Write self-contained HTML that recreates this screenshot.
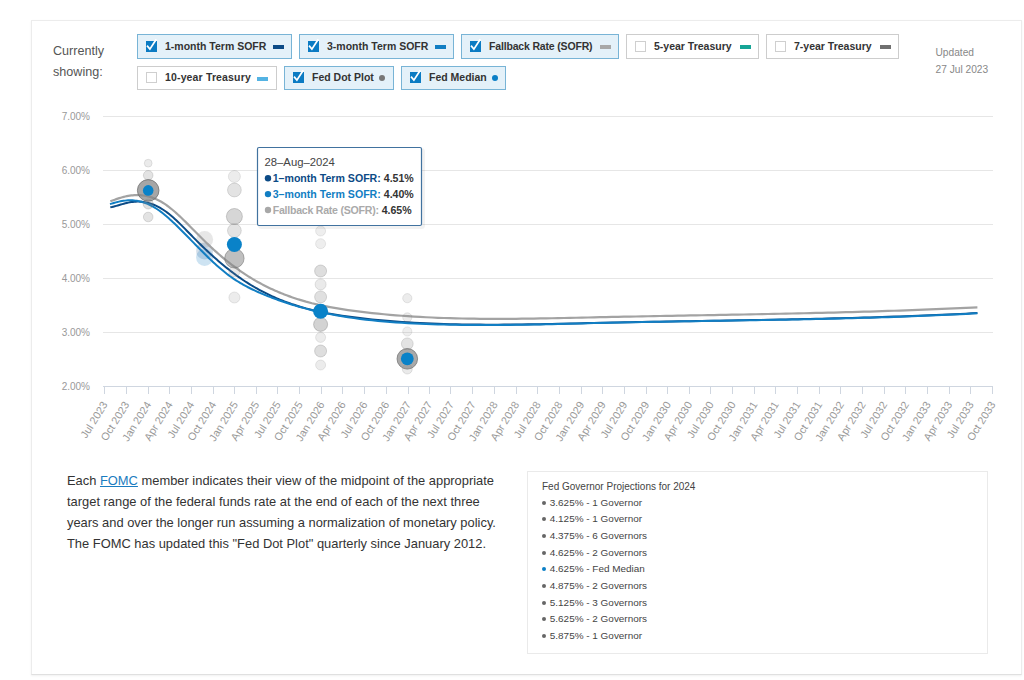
<!DOCTYPE html>
<html><head><meta charset="utf-8">
<style>
html,body{margin:0;padding:0;background:#fff;}
body{width:1024px;height:680px;overflow:hidden;position:relative;font-family:"Liberation Sans",sans-serif;}
.panel{position:absolute;left:31px;top:20px;width:991px;height:655px;box-sizing:border-box;border:1px solid #ececec;border-bottom-color:#e0e0e0;background:#fff;box-shadow:0 1px 2px rgba(0,0,0,0.06);}
.cur{position:absolute;left:53px;top:41px;font-size:12.6px;line-height:21px;color:#555;}
.btn{position:absolute;box-sizing:border-box;border:1px solid #cdcdcd;background:#fff;font-size:10.5px;font-weight:bold;color:#333;}
.btn.on{background:#e4f1f9;border-color:#78b4d6;}
.cb{position:absolute;left:8px;width:10.6px;height:10.6px;box-sizing:border-box;border:1px solid #cfcfcf;background:#fff;}
.btn.on .cb{background:#0b7bc3;border-color:#0b7bc3;}
.ckw{position:absolute;left:8px;width:14px;height:14px;}
.ckw svg{display:block}
.lbl{position:absolute;left:27px;white-space:nowrap;line-height:14px;}
.dash{position:absolute;width:11px;height:4px;}
.dot{position:absolute;width:6px;height:6px;border-radius:50%;}
.upd{position:absolute;left:935.5px;top:44px;font-size:10.2px;line-height:17px;color:#888;}
.chart{position:absolute;left:0;top:0;}
.yl{font-size:10px;fill:#999;text-anchor:end;}
.xl{font-size:10.8px;fill:#999;text-anchor:end;}
.tt{font-size:11.3px;}
.tt.b{font-size:10.6px;}
.tt.b{font-weight:bold;}
.para{position:absolute;left:67px;top:469.5px;width:470px;font-size:12.9px;line-height:21.25px;color:#333;}
.para a{color:#1a7cc0;text-decoration:underline;}
.proj{position:absolute;left:527px;top:471px;width:461px;height:183px;box-sizing:border-box;border:1px solid #eaeaea;}
.pt{position:absolute;left:14px;top:8.5px;font-size:10px;color:#444;white-space:nowrap;}
.pl{position:absolute;left:13.8px;top:22.5px;}
.pi{font-size:9.95px;line-height:16.7px;color:#444;white-space:nowrap;}
.pd{display:inline-block;width:4px;height:4px;border-radius:50%;margin-right:4px;vertical-align:1px;}
</style></head>
<body>
<div class="panel"></div>
<div class="cur">Currently<br>showing:</div>
<div class="btn on" style="left:137px;top:34px;width:155px;height:25px"><div class="cb" style="top:6.2px"></div><div class="ckw" style="top:3.2px"><svg class="ck" width="14" height="14" viewBox="0 0 14 14"><path d="M1.6,8.3 L3.9,11.1 L9.8,1.9" stroke="#fff" stroke-width="1.75" fill="none" stroke-linecap="square"/></svg></div><div class="lbl" style="top:3.5px;letter-spacing:0.00px">1-month Term SOFR</div><div class="dash" style="left:134.9px;top:10.0px;background:#0c4b86"></div></div>
<div class="btn on" style="left:299px;top:34px;width:155px;height:25px"><div class="cb" style="top:6.2px"></div><div class="ckw" style="top:3.2px"><svg class="ck" width="14" height="14" viewBox="0 0 14 14"><path d="M1.6,8.3 L3.9,11.1 L9.8,1.9" stroke="#fff" stroke-width="1.75" fill="none" stroke-linecap="square"/></svg></div><div class="lbl" style="top:3.5px;letter-spacing:0.00px">3-month Term SOFR</div><div class="dash" style="left:134.9px;top:10.0px;background:#117ec3"></div></div>
<div class="btn on" style="left:461px;top:34px;width:158px;height:25px"><div class="cb" style="top:6.2px"></div><div class="ckw" style="top:3.2px"><svg class="ck" width="14" height="14" viewBox="0 0 14 14"><path d="M1.6,8.3 L3.9,11.1 L9.8,1.9" stroke="#fff" stroke-width="1.75" fill="none" stroke-linecap="square"/></svg></div><div class="lbl" style="top:3.5px;letter-spacing:-0.17px">Fallback Rate (SOFR)</div><div class="dash" style="left:137.6px;top:10.0px;background:#a8a8a8"></div></div>
<div class="btn" style="left:626px;top:34px;width:133px;height:25px"><div class="cb" style="top:6.2px"></div><div class="lbl" style="top:3.5px;letter-spacing:0.00px">5-year Treasury</div><div class="dash" style="left:112.6px;top:10.0px;background:#16a596"></div></div>
<div class="btn" style="left:766px;top:34px;width:133px;height:25px"><div class="cb" style="top:6.2px"></div><div class="lbl" style="top:3.5px;letter-spacing:0.00px">7-year Treasury</div><div class="dash" style="left:112.6px;top:10.0px;background:#707070"></div></div>
<div class="btn" style="left:137px;top:66px;width:140px;height:24px"><div class="cb" style="top:5.2px"></div><div class="lbl" style="top:3.0px;letter-spacing:0.15px">10-year Treasury</div><div class="dash" style="left:119.4px;top:9.5px;background:#54b3e3"></div></div>
<div class="btn on" style="left:284px;top:66px;width:110px;height:24px"><div class="cb" style="top:5.2px"></div><div class="ckw" style="top:2.2px"><svg class="ck" width="14" height="14" viewBox="0 0 14 14"><path d="M1.6,8.3 L3.9,11.1 L9.8,1.9" stroke="#fff" stroke-width="1.75" fill="none" stroke-linecap="square"/></svg></div><div class="lbl" style="top:3.0px;letter-spacing:0.00px">Fed Dot Plot</div><div class="dot" style="left:94.4px;top:8.0px;background:#777777"></div></div>
<div class="btn on" style="left:401px;top:66px;width:105px;height:24px"><div class="cb" style="top:5.2px"></div><div class="ckw" style="top:2.2px"><svg class="ck" width="14" height="14" viewBox="0 0 14 14"><path d="M1.6,8.3 L3.9,11.1 L9.8,1.9" stroke="#fff" stroke-width="1.75" fill="none" stroke-linecap="square"/></svg></div><div class="lbl" style="top:3.0px;letter-spacing:0.00px">Fed Median</div><div class="dot" style="left:89.5px;top:8.0px;background:#0b7fc6"></div></div>
<div class="upd">Updated<br>27 Jul 2023</div>
<svg class="chart" width="1024" height="460" viewBox="0 0 1024 460">
<path d="M103,116.5 H993" stroke="#e6e6e6" stroke-width="1" fill="none"/>
<path d="M103,170.5 H993" stroke="#e6e6e6" stroke-width="1" fill="none"/>
<path d="M103,224.5 H993" stroke="#e6e6e6" stroke-width="1" fill="none"/>
<path d="M103,278.5 H993" stroke="#e6e6e6" stroke-width="1" fill="none"/>
<path d="M103,332.5 H993" stroke="#e6e6e6" stroke-width="1" fill="none"/>
<text x="90" y="120.1" class="yl">7.00%</text>
<text x="90" y="174.1" class="yl">6.00%</text>
<text x="90" y="228.1" class="yl">5.00%</text>
<text x="90" y="282.1" class="yl">4.00%</text>
<text x="90" y="336.1" class="yl">3.00%</text>
<text x="90" y="390.1" class="yl">2.00%</text>
<path d="M103,386.5 H993" stroke="#cfd6e0" stroke-width="1" fill="none"/>
<path d="M104.5,386 V394 M126.5,386 V394 M148.5,386 V394 M169.5,386 V394 M191.5,386 V394 M213.5,386 V394 M234.5,386 V394 M256.5,386 V394 M277.5,386 V394 M299.5,386 V394 M321.5,386 V394 M342.5,386 V394 M364.5,386 V394 M386.5,386 V394 M408.5,386 V394 M429.5,386 V394 M450.5,386 V394 M472.5,386 V394 M494.5,386 V394 M516.5,386 V394 M537.5,386 V394 M559.5,386 V394 M581.5,386 V394 M602.5,386 V394 M624.5,386 V394 M646.5,386 V394 M667.5,386 V394 M689.5,386 V394 M710.5,386 V394 M732.5,386 V394 M754.5,386 V394 M775.5,386 V394 M797.5,386 V394 M819.5,386 V394 M840.5,386 V394 M862.5,386 V394 M884.5,386 V394 M905.5,386 V394 M927.5,386 V394 M949.5,386 V394 M970.5,386 V394 M992.5,386 V394 " stroke="#cfd6e0" stroke-width="1" fill="none"/>
<text class="xl" transform="translate(108.0,404.5) rotate(-58)" x="0" y="0">Jul 2023</text>
<text class="xl" transform="translate(129.8,404.5) rotate(-58)" x="0" y="0">Oct 2023</text>
<text class="xl" transform="translate(151.6,404.5) rotate(-58)" x="0" y="0">Jan 2024</text>
<text class="xl" transform="translate(173.2,404.5) rotate(-58)" x="0" y="0">Apr 2024</text>
<text class="xl" transform="translate(194.8,404.5) rotate(-58)" x="0" y="0">Jul 2024</text>
<text class="xl" transform="translate(216.6,404.5) rotate(-58)" x="0" y="0">Oct 2024</text>
<text class="xl" transform="translate(238.4,404.5) rotate(-58)" x="0" y="0">Jan 2025</text>
<text class="xl" transform="translate(259.8,404.5) rotate(-58)" x="0" y="0">Apr 2025</text>
<text class="xl" transform="translate(281.3,404.5) rotate(-58)" x="0" y="0">Jul 2025</text>
<text class="xl" transform="translate(303.1,404.5) rotate(-58)" x="0" y="0">Oct 2025</text>
<text class="xl" transform="translate(325.0,404.5) rotate(-58)" x="0" y="0">Jan 2026</text>
<text class="xl" transform="translate(346.3,404.5) rotate(-58)" x="0" y="0">Apr 2026</text>
<text class="xl" transform="translate(367.9,404.5) rotate(-58)" x="0" y="0">Jul 2026</text>
<text class="xl" transform="translate(389.7,404.5) rotate(-58)" x="0" y="0">Oct 2026</text>
<text class="xl" transform="translate(411.5,404.5) rotate(-58)" x="0" y="0">Jan 2027</text>
<text class="xl" transform="translate(432.8,404.5) rotate(-58)" x="0" y="0">Apr 2027</text>
<text class="xl" transform="translate(454.4,404.5) rotate(-58)" x="0" y="0">Jul 2027</text>
<text class="xl" transform="translate(476.2,404.5) rotate(-58)" x="0" y="0">Oct 2027</text>
<text class="xl" transform="translate(498.1,404.5) rotate(-58)" x="0" y="0">Jan 2028</text>
<text class="xl" transform="translate(519.6,404.5) rotate(-58)" x="0" y="0">Apr 2028</text>
<text class="xl" transform="translate(541.2,404.5) rotate(-58)" x="0" y="0">Jul 2028</text>
<text class="xl" transform="translate(563.0,404.5) rotate(-58)" x="0" y="0">Oct 2028</text>
<text class="xl" transform="translate(584.8,404.5) rotate(-58)" x="0" y="0">Jan 2029</text>
<text class="xl" transform="translate(606.2,404.5) rotate(-58)" x="0" y="0">Apr 2029</text>
<text class="xl" transform="translate(627.8,404.5) rotate(-58)" x="0" y="0">Jul 2029</text>
<text class="xl" transform="translate(649.6,404.5) rotate(-58)" x="0" y="0">Oct 2029</text>
<text class="xl" transform="translate(671.4,404.5) rotate(-58)" x="0" y="0">Jan 2030</text>
<text class="xl" transform="translate(692.7,404.5) rotate(-58)" x="0" y="0">Apr 2030</text>
<text class="xl" transform="translate(714.3,404.5) rotate(-58)" x="0" y="0">Jul 2030</text>
<text class="xl" transform="translate(736.1,404.5) rotate(-58)" x="0" y="0">Oct 2030</text>
<text class="xl" transform="translate(757.9,404.5) rotate(-58)" x="0" y="0">Jan 2031</text>
<text class="xl" transform="translate(779.3,404.5) rotate(-58)" x="0" y="0">Apr 2031</text>
<text class="xl" transform="translate(800.9,404.5) rotate(-58)" x="0" y="0">Jul 2031</text>
<text class="xl" transform="translate(822.7,404.5) rotate(-58)" x="0" y="0">Oct 2031</text>
<text class="xl" transform="translate(844.5,404.5) rotate(-58)" x="0" y="0">Jan 2032</text>
<text class="xl" transform="translate(866.1,404.5) rotate(-58)" x="0" y="0">Apr 2032</text>
<text class="xl" transform="translate(887.6,404.5) rotate(-58)" x="0" y="0">Jul 2032</text>
<text class="xl" transform="translate(909.5,404.5) rotate(-58)" x="0" y="0">Oct 2032</text>
<text class="xl" transform="translate(931.3,404.5) rotate(-58)" x="0" y="0">Jan 2033</text>
<text class="xl" transform="translate(952.6,404.5) rotate(-58)" x="0" y="0">Apr 2033</text>
<text class="xl" transform="translate(974.2,404.5) rotate(-58)" x="0" y="0">Jul 2033</text>
<text class="xl" transform="translate(996.0,404.5) rotate(-58)" x="0" y="0">Oct 2033</text>
<circle cx="204.6" cy="239.5" r="8.5" fill="#a0a0a0" fill-opacity="0.25"/>
<circle cx="204.6" cy="251" r="8.5" fill="#0b4a87" fill-opacity="0.18"/>
<circle cx="204.6" cy="257.5" r="8.5" fill="#1a80c4" fill-opacity="0.22"/>
<path d="M110.3,201.33 L111.8,200.76 L113.3,200.20 L114.8,199.66 L116.3,199.13 L117.8,198.63 L119.3,198.15 L120.8,197.70 L122.3,197.28 L123.8,196.88 L125.3,196.52 L126.8,196.20 L128.3,195.91 L129.8,195.66 L131.3,195.45 L132.8,195.29 L134.3,195.17 L135.8,195.10 L137.3,195.08 L138.8,195.11 L140.3,195.18 L141.8,195.31 L143.3,195.49 L144.8,195.71 L146.3,195.99 L147.8,196.33 L149.3,196.71 L150.8,197.15 L152.3,197.65 L153.8,198.20 L155.3,198.81 L156.8,199.47 L158.3,200.20 L159.8,200.98 L161.3,201.82 L162.8,202.72 L164.3,203.67 L165.8,204.69 L167.3,205.75 L168.8,206.87 L170.3,208.04 L171.8,209.24 L173.3,210.49 L174.8,211.78 L176.3,213.11 L177.8,214.47 L179.3,215.85 L180.8,217.27 L182.3,218.71 L183.8,220.17 L185.3,221.65 L186.8,223.14 L188.3,224.65 L189.8,226.17 L191.3,227.69 L192.8,229.22 L194.3,230.75 L195.8,232.28 L197.3,233.81 L198.8,235.33 L200.3,236.84 L201.8,238.34 L203.3,239.82 L204.8,241.28 L206.3,242.73 L207.8,244.16 L209.3,245.58 L210.8,246.98 L212.3,248.36 L213.8,249.73 L215.3,251.08 L216.8,252.41 L218.3,253.73 L219.8,255.03 L221.3,256.31 L222.8,257.57 L224.3,258.82 L225.8,260.05 L227.3,261.26 L228.8,262.45 L230.3,263.63 L231.8,264.79 L233.3,265.93 L234.8,267.05 L236.3,268.15 L237.8,269.23 L239.3,270.30 L240.8,271.35 L242.3,272.38 L243.8,273.39 L245.3,274.38 L246.8,275.35 L248.3,276.31 L249.8,277.25 L251.3,278.17 L252.8,279.08 L254.3,279.96 L255.8,280.83 L257.3,281.69 L258.8,282.52 L260.3,283.34 L261.8,284.15 L263.3,284.94 L264.8,285.71 L266.3,286.47 L267.8,287.21 L269.3,287.94 L270.8,288.65 L272.3,289.35 L273.8,290.04 L275.3,290.71 L276.8,291.36 L278.3,292.00 L279.8,292.63 L281.3,293.25 L282.8,293.85 L284.3,294.44 L285.8,295.01 L287.3,295.58 L288.8,296.13 L290.3,296.66 L291.8,297.19 L293.3,297.70 L294.8,298.21 L296.3,298.70 L297.8,299.18 L299.3,299.65 L300.0,299.86 L306.0,301.61 L312.0,303.20 L318.0,304.64 L324.0,305.94 L330.0,307.13 L336.0,308.20 L342.0,309.18 L348.0,310.07 L354.0,310.89 L360.0,311.66 L366.0,312.37 L372.0,313.04 L378.0,313.66 L384.0,314.25 L390.0,314.79 L396.0,315.29 L402.0,315.75 L408.0,316.18 L414.0,316.57 L420.0,316.92 L426.0,317.24 L432.0,317.52 L438.0,317.78 L444.0,318.00 L450.0,318.20 L456.0,318.37 L462.0,318.51 L468.0,318.62 L474.0,318.71 L480.0,318.78 L486.0,318.83 L492.0,318.86 L498.0,318.86 L504.0,318.85 L510.0,318.82 L516.0,318.78 L522.0,318.72 L528.0,318.65 L534.0,318.57 L540.0,318.47 L546.0,318.37 L552.0,318.26 L558.0,318.14 L564.0,318.02 L570.0,317.89 L576.0,317.76 L582.0,317.62 L588.0,317.49 L594.0,317.35 L600.0,317.22 L606.0,317.09 L612.0,316.96 L618.0,316.84 L624.0,316.72 L630.0,316.60 L636.0,316.48 L642.0,316.36 L648.0,316.24 L654.0,316.13 L660.0,316.02 L666.0,315.91 L672.0,315.80 L678.0,315.69 L684.0,315.58 L690.0,315.47 L696.0,315.36 L702.0,315.25 L708.0,315.14 L714.0,315.03 L720.0,314.92 L726.0,314.81 L732.0,314.70 L738.0,314.59 L744.0,314.48 L750.0,314.36 L756.0,314.25 L762.0,314.13 L768.0,314.01 L774.0,313.89 L780.0,313.77 L786.0,313.64 L792.0,313.51 L798.0,313.38 L804.0,313.25 L810.0,313.11 L816.0,312.97 L822.0,312.83 L828.0,312.68 L834.0,312.53 L840.0,312.37 L846.0,312.21 L852.0,312.05 L858.0,311.88 L864.0,311.71 L870.0,311.53 L876.0,311.35 L882.0,311.16 L888.0,310.97 L894.0,310.77 L900.0,310.57 L906.0,310.36 L912.0,310.14 L918.0,309.92 L924.0,309.69 L930.0,309.46 L936.0,309.22 L942.0,308.97 L948.0,308.71 L954.0,308.45 L960.0,308.18 L966.0,307.90 L972.0,307.62 L977.4,307.36" stroke="#a3a3a3" stroke-width="2.2" fill="none" stroke-linecap="butt"/>
<path d="M110.3,207.34 L111.8,207.03 L113.3,206.67 L114.8,206.29 L116.3,205.88 L117.8,205.45 L119.3,205.01 L120.8,204.57 L122.3,204.14 L123.8,203.72 L125.3,203.32 L126.8,202.96 L128.3,202.63 L129.8,202.34 L131.3,202.10 L132.8,201.90 L134.3,201.76 L135.8,201.66 L137.3,201.61 L138.8,201.61 L140.3,201.67 L141.8,201.78 L143.3,201.94 L144.8,202.16 L146.3,202.44 L147.8,202.78 L149.3,203.17 L150.8,203.63 L152.3,204.15 L153.8,204.73 L155.3,205.38 L156.8,206.08 L158.3,206.85 L159.8,207.67 L161.3,208.55 L162.8,209.49 L164.3,210.48 L165.8,211.53 L167.3,212.63 L168.8,213.78 L170.3,214.99 L171.8,216.24 L173.3,217.54 L174.8,218.88 L176.3,220.27 L177.8,221.68 L179.3,223.14 L180.8,224.61 L182.3,226.11 L183.8,227.63 L185.3,229.16 L186.8,230.70 L188.3,232.24 L189.8,233.78 L191.3,235.32 L192.8,236.85 L194.3,238.36 L195.8,239.87 L197.3,241.36 L198.8,242.85 L200.3,244.31 L201.8,245.77 L203.3,247.21 L204.8,248.65 L206.3,250.06 L207.8,251.47 L209.3,252.86 L210.8,254.23 L212.3,255.59 L213.8,256.94 L215.3,258.27 L216.8,259.59 L218.3,260.89 L219.8,262.18 L221.3,263.45 L222.8,264.71 L224.3,265.95 L225.8,267.17 L227.3,268.37 L228.8,269.56 L230.3,270.73 L231.8,271.89 L233.3,273.02 L234.8,274.14 L236.3,275.24 L237.8,276.33 L239.3,277.39 L240.8,278.43 L242.3,279.46 L243.8,280.47 L245.3,281.46 L246.8,282.43 L248.3,283.38 L249.8,284.32 L251.3,285.23 L252.8,286.13 L254.3,287.01 L255.8,287.88 L257.3,288.73 L258.8,289.56 L260.3,290.38 L261.8,291.18 L263.3,291.96 L264.8,292.73 L266.3,293.48 L267.8,294.21 L269.3,294.94 L270.8,295.64 L272.3,296.33 L273.8,297.01 L275.3,297.67 L276.8,298.32 L278.3,298.96 L279.8,299.58 L281.3,300.18 L282.8,300.78 L284.3,301.36 L285.8,301.92 L287.3,302.48 L288.8,303.02 L290.3,303.55 L291.8,304.07 L293.3,304.57 L294.8,305.07 L296.3,305.55 L297.8,306.02 L299.3,306.48 L300.0,306.69 L306.0,308.40 L312.0,309.95 L318.0,311.35 L324.0,312.61 L330.0,313.75 L336.0,314.79 L342.0,315.72 L348.0,316.57 L354.0,317.35 L360.0,318.07 L366.0,318.75 L372.0,319.38 L378.0,319.97 L384.0,320.52 L390.0,321.02 L396.0,321.49 L402.0,321.92 L408.0,322.31 L414.0,322.67 L420.0,322.99 L426.0,323.28 L432.0,323.54 L438.0,323.77 L444.0,323.97 L450.0,324.14 L456.0,324.28 L462.0,324.40 L468.0,324.49 L474.0,324.56 L480.0,324.61 L486.0,324.64 L492.0,324.65 L498.0,324.64 L504.0,324.61 L510.0,324.57 L516.0,324.51 L522.0,324.44 L528.0,324.35 L534.0,324.26 L540.0,324.15 L546.0,324.04 L552.0,323.92 L558.0,323.79 L564.0,323.66 L570.0,323.53 L576.0,323.39 L582.0,323.25 L588.0,323.11 L594.0,322.98 L600.0,322.84 L606.0,322.71 L612.0,322.58 L618.0,322.46 L624.0,322.34 L630.0,322.22 L636.0,322.10 L642.0,321.99 L648.0,321.87 L654.0,321.76 L660.0,321.66 L666.0,321.55 L672.0,321.45 L678.0,321.34 L684.0,321.24 L690.0,321.14 L696.0,321.03 L702.0,320.93 L708.0,320.83 L714.0,320.73 L720.0,320.63 L726.0,320.53 L732.0,320.42 L738.0,320.32 L744.0,320.22 L750.0,320.11 L756.0,320.00 L762.0,319.89 L768.0,319.78 L774.0,319.67 L780.0,319.55 L786.0,319.43 L792.0,319.31 L798.0,319.19 L804.0,319.06 L810.0,318.93 L816.0,318.80 L822.0,318.66 L828.0,318.51 L834.0,318.37 L840.0,318.22 L846.0,318.06 L852.0,317.90 L858.0,317.73 L864.0,317.56 L870.0,317.39 L876.0,317.20 L882.0,317.01 L888.0,316.82 L894.0,316.62 L900.0,316.41 L906.0,316.20 L912.0,315.98 L918.0,315.75 L924.0,315.51 L930.0,315.27 L936.0,315.02 L942.0,314.76 L948.0,314.49 L954.0,314.22 L960.0,313.93 L966.0,313.64 L972.0,313.34 L977.4,313.06" stroke="#0c4b86" stroke-width="2" fill="none" stroke-linecap="butt"/>
<path d="M110.0,204.11 L111.5,203.64 L113.0,203.19 L114.5,202.76 L116.0,202.35 L117.5,201.98 L119.0,201.63 L120.5,201.32 L122.0,201.05 L123.5,200.81 L125.0,200.62 L126.5,200.47 L128.0,200.37 L129.5,200.32 L131.0,200.32 L132.5,200.37 L134.0,200.47 L135.5,200.63 L137.0,200.84 L138.5,201.11 L140.0,201.43 L141.5,201.80 L143.0,202.23 L144.5,202.72 L146.0,203.27 L147.5,203.87 L149.0,204.53 L150.5,205.25 L152.0,206.04 L153.5,206.88 L155.0,207.78 L156.5,208.73 L158.0,209.74 L159.5,210.80 L161.0,211.91 L162.5,213.06 L164.0,214.25 L165.5,215.48 L167.0,216.76 L168.5,218.06 L170.0,219.40 L171.5,220.77 L173.0,222.16 L174.5,223.58 L176.0,225.02 L177.5,226.48 L179.0,227.96 L180.5,229.45 L182.0,230.95 L183.5,232.46 L185.0,233.98 L186.5,235.50 L188.0,237.03 L189.5,238.57 L191.0,240.10 L192.5,241.64 L194.0,243.17 L195.5,244.70 L197.0,246.23 L198.5,247.76 L200.0,249.27 L201.5,250.78 L203.0,252.28 L204.5,253.78 L206.0,255.25 L207.5,256.72 L209.0,258.17 L210.5,259.61 L212.0,261.03 L213.5,262.42 L215.0,263.80 L216.5,265.16 L218.0,266.50 L219.5,267.81 L221.0,269.10 L222.5,270.35 L224.0,271.59 L225.5,272.79 L227.0,273.96 L228.5,275.09 L230.0,276.20 L231.5,277.27 L233.0,278.31 L234.5,279.33 L236.0,280.31 L237.5,281.26 L239.0,282.19 L240.5,283.09 L242.0,283.97 L243.5,284.82 L245.0,285.65 L246.5,286.46 L248.0,287.25 L249.5,288.01 L251.0,288.76 L252.5,289.49 L254.0,290.20 L255.5,290.90 L257.0,291.58 L258.5,292.24 L260.0,292.90 L261.5,293.54 L263.0,294.17 L264.5,294.79 L266.0,295.40 L267.5,296.00 L269.0,296.59 L270.5,297.18 L272.0,297.75 L273.5,298.32 L275.0,298.88 L276.5,299.43 L278.0,299.97 L279.5,300.50 L281.0,301.03 L282.5,301.55 L284.0,302.05 L285.5,302.56 L287.0,303.05 L288.5,303.53 L290.0,304.01 L291.5,304.48 L293.0,304.94 L294.5,305.40 L296.0,305.85 L297.5,306.29 L299.0,306.72 L300.0,307.00 L306.0,308.64 L312.0,310.17 L318.0,311.59 L324.0,312.90 L330.0,314.12 L336.0,315.25 L342.0,316.29 L348.0,317.24 L354.0,318.12 L360.0,318.92 L366.0,319.64 L372.0,320.31 L378.0,320.91 L384.0,321.45 L390.0,321.94 L396.0,322.38 L402.0,322.78 L408.0,323.14 L414.0,323.47 L420.0,323.76 L426.0,324.02 L432.0,324.25 L438.0,324.44 L444.0,324.61 L450.0,324.75 L456.0,324.87 L462.0,324.96 L468.0,325.02 L474.0,325.07 L480.0,325.09 L486.0,325.09 L492.0,325.07 L498.0,325.04 L504.0,324.99 L510.0,324.92 L516.0,324.84 L522.0,324.75 L528.0,324.64 L534.0,324.53 L540.0,324.41 L546.0,324.27 L552.0,324.14 L558.0,324.00 L564.0,323.85 L570.0,323.70 L576.0,323.55 L582.0,323.40 L588.0,323.25 L594.0,323.10 L600.0,322.96 L606.0,322.82 L612.0,322.68 L618.0,322.55 L624.0,322.43 L630.0,322.30 L636.0,322.19 L642.0,322.07 L648.0,321.96 L654.0,321.85 L660.0,321.74 L666.0,321.63 L672.0,321.53 L678.0,321.43 L684.0,321.33 L690.0,321.23 L696.0,321.14 L702.0,321.04 L708.0,320.94 L714.0,320.85 L720.0,320.75 L726.0,320.66 L732.0,320.56 L738.0,320.47 L744.0,320.37 L750.0,320.27 L756.0,320.17 L762.0,320.07 L768.0,319.97 L774.0,319.86 L780.0,319.76 L786.0,319.65 L792.0,319.53 L798.0,319.42 L804.0,319.30 L810.0,319.17 L816.0,319.05 L822.0,318.92 L828.0,318.78 L834.0,318.64 L840.0,318.50 L846.0,318.35 L852.0,318.19 L858.0,318.03 L864.0,317.87 L870.0,317.70 L876.0,317.52 L882.0,317.33 L888.0,317.14 L894.0,316.94 L900.0,316.74 L906.0,316.52 L912.0,316.30 L918.0,316.07 L924.0,315.84 L930.0,315.59 L936.0,315.34 L942.0,315.07 L948.0,314.80 L954.0,314.52 L960.0,314.23 L966.0,313.93 L972.0,313.61 L977.4,313.32" stroke="#117ec3" stroke-width="2" fill="none" stroke-linecap="butt"/>
<circle cx="148.2" cy="163.2" r="3.9" fill="#888" fill-opacity="0.17" stroke="#666" stroke-opacity="0.15" stroke-width="1"/>
<circle cx="148.2" cy="175.3" r="4.8" fill="#888" fill-opacity="0.23" stroke="#666" stroke-opacity="0.20" stroke-width="1"/>
<circle cx="148.2" cy="217.0" r="4.8" fill="#888" fill-opacity="0.23" stroke="#666" stroke-opacity="0.20" stroke-width="1"/>
<circle cx="148.2" cy="204.0" r="5.0" fill="#888" fill-opacity="0.26" stroke="#666" stroke-opacity="0.23" stroke-width="1"/>
<circle cx="148.2" cy="190.4" r="10.8" fill="#888" fill-opacity="0.75" stroke="#666" stroke-opacity="0.67" stroke-width="1"/>
<circle cx="234.4" cy="176.5" r="6.0" fill="#888" fill-opacity="0.16" stroke="#666" stroke-opacity="0.14" stroke-width="1"/>
<circle cx="234.4" cy="190.0" r="6.9" fill="#888" fill-opacity="0.24" stroke="#666" stroke-opacity="0.21" stroke-width="1"/>
<circle cx="234.4" cy="216.5" r="8.0" fill="#888" fill-opacity="0.34" stroke="#666" stroke-opacity="0.30" stroke-width="1"/>
<circle cx="234.4" cy="230.6" r="6.9" fill="#888" fill-opacity="0.24" stroke="#666" stroke-opacity="0.21" stroke-width="1"/>
<circle cx="234.4" cy="271.5" r="5.5" fill="#888" fill-opacity="0.19" stroke="#666" stroke-opacity="0.17" stroke-width="1"/>
<circle cx="234.4" cy="297.5" r="5.5" fill="#888" fill-opacity="0.16" stroke="#666" stroke-opacity="0.14" stroke-width="1"/>
<circle cx="234.4" cy="258.3" r="9.7" fill="#888" fill-opacity="0.54" stroke="#666" stroke-opacity="0.48" stroke-width="1"/>
<circle cx="320.6" cy="231.0" r="5.0" fill="#888" fill-opacity="0.14" stroke="#666" stroke-opacity="0.13" stroke-width="1"/>
<circle cx="320.6" cy="243.7" r="5.0" fill="#888" fill-opacity="0.14" stroke="#666" stroke-opacity="0.13" stroke-width="1"/>
<circle cx="320.6" cy="271.0" r="6.0" fill="#888" fill-opacity="0.28" stroke="#666" stroke-opacity="0.25" stroke-width="1"/>
<circle cx="320.6" cy="284.4" r="5.5" fill="#888" fill-opacity="0.18" stroke="#666" stroke-opacity="0.17" stroke-width="1"/>
<circle cx="320.6" cy="296.9" r="6.0" fill="#888" fill-opacity="0.26" stroke="#666" stroke-opacity="0.23" stroke-width="1"/>
<circle cx="320.6" cy="324.4" r="7.0" fill="#888" fill-opacity="0.37" stroke="#666" stroke-opacity="0.33" stroke-width="1"/>
<circle cx="320.6" cy="337.4" r="5.0" fill="#888" fill-opacity="0.16" stroke="#666" stroke-opacity="0.14" stroke-width="1"/>
<circle cx="320.6" cy="351.0" r="6.0" fill="#888" fill-opacity="0.28" stroke="#666" stroke-opacity="0.25" stroke-width="1"/>
<circle cx="320.6" cy="365.0" r="5.0" fill="#888" fill-opacity="0.16" stroke="#666" stroke-opacity="0.14" stroke-width="1"/>
<circle cx="407.3" cy="298.2" r="4.6" fill="#888" fill-opacity="0.16" stroke="#666" stroke-opacity="0.14" stroke-width="1"/>
<circle cx="407.3" cy="317.4" r="4.6" fill="#888" fill-opacity="0.16" stroke="#666" stroke-opacity="0.14" stroke-width="1"/>
<circle cx="407.3" cy="331.5" r="4.6" fill="#888" fill-opacity="0.14" stroke="#666" stroke-opacity="0.13" stroke-width="1"/>
<circle cx="407.3" cy="343.8" r="5.9" fill="#888" fill-opacity="0.24" stroke="#666" stroke-opacity="0.21" stroke-width="1"/>
<circle cx="407.3" cy="369.0" r="5.0" fill="#888" fill-opacity="0.18" stroke="#666" stroke-opacity="0.17" stroke-width="1"/>
<circle cx="407.3" cy="358.8" r="10.3" fill="#888" fill-opacity="0.72" stroke="#666" stroke-opacity="0.65" stroke-width="1"/>
<circle cx="148.2" cy="190.4" r="5.3" fill="#0a82c8"/>
<circle cx="234.4" cy="244.5" r="7.5" fill="#0a82c8"/>
<circle cx="320.6" cy="311.3" r="7.5" fill="#0a82c8"/>
<circle cx="407.3" cy="358.8" r="6.4" fill="#0a82c8"/>
<rect x="258.5" y="148.5" width="164" height="78" rx="2" fill="none" stroke="#000" stroke-opacity="0.05" stroke-width="3" transform="translate(1,1)"/>
<rect x="257.5" y="147.5" width="164" height="78" rx="1.5" fill="#fff" fill-opacity="0.97" stroke="#41729f" stroke-width="1.2"/>
<text x="264.5" y="165.8" class="tt" fill="#444">28–Aug–2024</text>
<circle cx="268" cy="178.3" r="3.2" fill="#0c4b86"/>
<text x="272.7" y="181.8" class="tt b"><tspan fill="#0c4b86">1–month Term SOFR:</tspan><tspan fill="#333"> 4.51%</tspan></text>
<circle cx="268" cy="194.1" r="3.2" fill="#117ec3"/>
<text x="272.7" y="197.6" class="tt b"><tspan fill="#117ec3">3–month Term SOFR:</tspan><tspan fill="#333"> 4.40%</tspan></text>
<circle cx="268" cy="210" r="3.2" fill="#a8a8a8"/>
<text x="272.7" y="213.5" class="tt b"><tspan fill="#aaa" letter-spacing="-0.25">Fallback Rate (SOFR):</tspan><tspan fill="#333"> 4.65%</tspan></text>
</svg>
<div class="para">Each <a>FOMC</a> member indicates their view of the midpoint of the appropriate<br>target range of the federal funds rate at the end of each of the next three<br>years and over the longer run assuming a normalization of monetary policy.<br>The FOMC has updated this "Fed Dot Plot" quarterly since January 2012.</div>
<div class="proj"><div class="pt">Fed Governor Projections for 2024</div><div class="pl"><div class="pi"><span class="pd" style="background:#666"></span>3.625% - 1 Governor</div><div class="pi"><span class="pd" style="background:#666"></span>4.125% - 1 Governor</div><div class="pi"><span class="pd" style="background:#666"></span>4.375% - 6 Governors</div><div class="pi"><span class="pd" style="background:#666"></span>4.625% - 2 Governors</div><div class="pi"><span class="pd" style="background:#0b7fc6"></span>4.625% - Fed Median</div><div class="pi"><span class="pd" style="background:#666"></span>4.875% - 2 Governors</div><div class="pi"><span class="pd" style="background:#666"></span>5.125% - 3 Governors</div><div class="pi"><span class="pd" style="background:#666"></span>5.625% - 2 Governors</div><div class="pi"><span class="pd" style="background:#666"></span>5.875% - 1 Governor</div></div></div>
</body></html>
